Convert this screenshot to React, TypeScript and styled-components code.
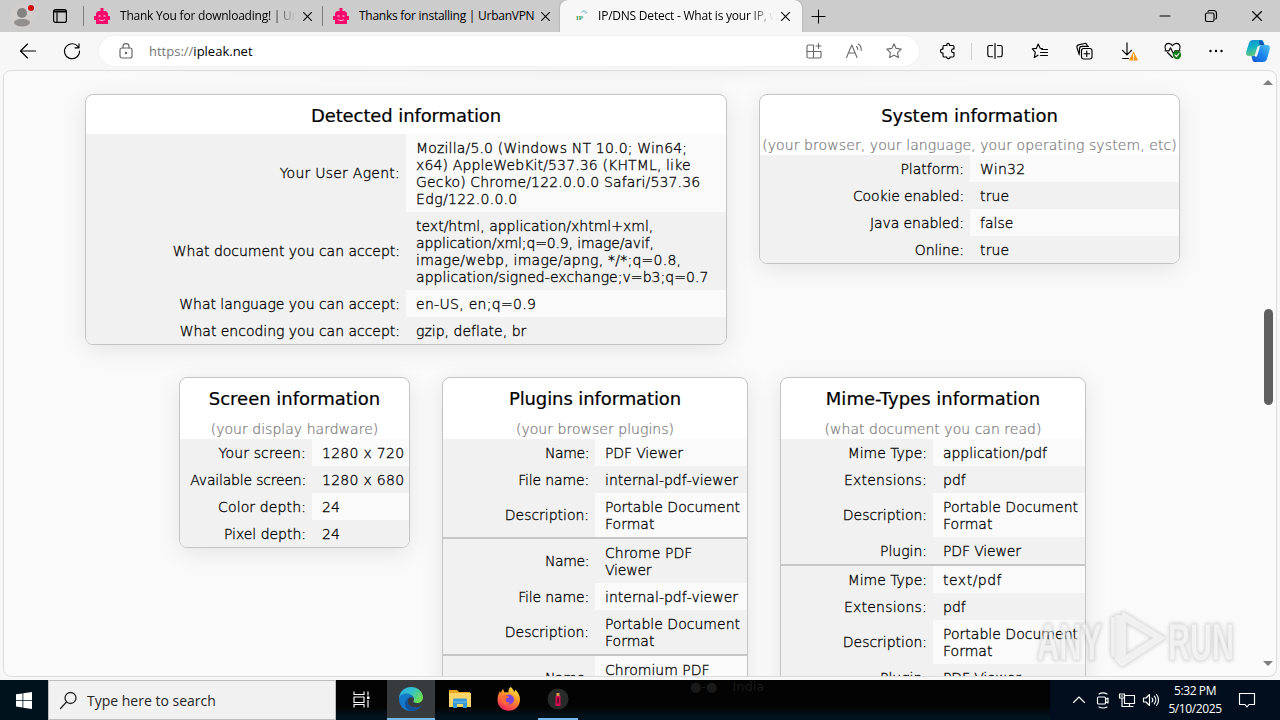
import React from 'react';
import styled, { createGlobalStyle } from 'styled-components';

const GlobalStyle = createGlobalStyle`
  * {
    box-sizing: border-box;
  }
  body {
    margin: 0;
    overflow: hidden;
    background: #f7f7f7;
    font-family: "Open Sans", "Noto Sans", sans-serif;
  }
  svg {
    display: block;
    flex-shrink: 0;
    overflow: visible;
  }
`;

const Desktop = styled.div`
  width: 1280px;
  height: 720px;
  display: flex;
  flex-direction: column;
  overflow: hidden;
`;

/* ---------- tab strip ---------- */

const TabStrip = styled.div`
  display: flex;
  height: 32px;
  flex-shrink: 0;
  background: #cccccc;
`;

const Slot = styled.div<{ w: number; muted?: boolean }>`
  width: ${(p) => p.w}px;
  flex-shrink: 0;
  display: flex;
  align-items: center;
  justify-content: center;
  color: ${(p) => (p.muted ? '#6a6a6a' : 'inherit')};
`;

const StripDivider = styled.div`
  width: 1px;
  height: 20px;
  margin-top: 6px;
  background: #7d7d7d;
`;

const Tab = styled.div<{ w: number; active?: boolean }>`
  width: ${(p) => p.w}px;
  display: flex;
  align-items: center;
  padding: 0 ${(p) => (p.active ? 12 : 10)}px 0 ${(p) => (p.active ? 16 : 10)}px;
  background: ${(p) => (p.active ? '#f7f7f7' : 'transparent')};
  border-radius: ${(p) => (p.active ? '8px 8px 0 0' : '0')};
  box-shadow: ${(p) => (p.active ? '0 0 2px #8d8d8d' : 'none')};
`;

const TabTitle = styled.div<{ fade?: boolean }>`
  width: 176px;
  margin-left: 10px;
  font-size: 12px;
  line-height: 18px;
  letter-spacing: ${(p) => (p.fade ? -0.22 : -0.26)}px;
  white-space: nowrap;
  overflow: hidden;
  color: #000;
  mask-image: ${(p) => (p.fade ? 'linear-gradient(to right, #000 86%, transparent 100%)' : 'none')};
`;

const Push = styled.div`
  flex: 1;
`;

/* ---------- toolbar ---------- */

const Toolbar = styled.div`
  display: flex;
  align-items: center;
  height: 38px;
  flex-shrink: 0;
  padding-left: 6px;
  background: #f7f7f7;
`;

const AddressBar = styled.div`
  display: flex;
  align-items: center;
  width: 820px;
  height: 30px;
  margin-left: 5px;
  padding-left: 12px;
  border-radius: 15px;
  background: #fff;
  box-shadow: 0 0 2px #e4e4e4;
`;

const Url = styled.div`
  flex: 1;
  margin-left: 8px;
  font-size: 13px;
  color: #000;
  span {
    color: #767676;
  }
`;

const ToolDivider = styled.div`
  width: 1px;
  height: 17px;
  background: #cfcfcf;
`;

/* ---------- page ---------- */

const Viewport = styled.div`
  position: relative;
  display: flex;
  width: 1274px;
  height: 607px;
  margin: 0 0 3px 3px;
  flex-shrink: 0;
  overflow: hidden;
  border: 1px solid #dcdcdc;
  border-radius: 8px;
  background: #fafafa;
`;

const Page = styled.div`
  width: 1256px;
  height: 605px;
  padding: 23px 0 0 81px;
  overflow: hidden;
  font-family: Verdana, "DejaVu Sans", sans-serif;
  background: radial-gradient(ellipse 560px 14px at 636px 0, #f1f1f1, #fafafa);
`;

const CardRow = styled.div<{ indent?: number; h: number }>`
  display: flex;
  align-items: flex-start;
  gap: 32px;
  height: ${(p) => p.h}px;
  padding-left: ${(p) => p.indent || 0}px;
`;

const CardBox = styled.div<{ w: number }>`
  width: ${(p) => p.w}px;
  flex-shrink: 0;
  overflow: hidden;
  border: 1px solid #c4c4c4;
  border-radius: 8px;
  background: #fff;
  box-shadow: 0 5px 24px rgba(0, 0, 0, 0.09);
`;

const CardTitle = styled.h3<{ h: number; spacing: number }>`
  height: ${(p) => p.h}px;
  margin: 0;
  text-align: center;
  font-size: 18px;
  font-weight: 400;
  line-height: 41px;
  letter-spacing: ${(p) => p.spacing}px;
  color: #000;
  -webkit-text-stroke: 0.2px #000;
`;

const CardNote = styled.div<{ h: number }>`
  display: flex;
  justify-content: center;
  height: ${(p) => p.h}px;
  font-size: 14px;
  font-weight: 200;
  line-height: ${(p) => (p.h > 20 ? 23 : 21)}px;
  letter-spacing: ${(p) => (p.h > 20 ? 0.03 : 0.09)}px;
  white-space: nowrap;
  color: #777;
  -webkit-text-stroke: 0.2px #777;
`;

const Group = styled.div`
  & + & {
    border-top: 2px solid #c6c6c6;
  }
`;

const InfoRow = styled.div`
  display: flex;
  font-size: 14px;
  font-weight: 200;
  line-height: 17px;
  color: #000;
  -webkit-text-stroke: 0.3px #000;
`;

const InfoLabel = styled.div<{ w: number; spacing: number }>`
  width: ${(p) => p.w}px;
  flex-shrink: 0;
  display: flex;
  align-items: center;
  justify-content: flex-end;
  padding: 1.5px 6px 0 0;
  letter-spacing: ${(p) => p.spacing}px;
  white-space: nowrap;
  background: #f1f1f1;
`;

const InfoValue = styled.div<{ light: boolean }>`
  flex: 1;
  padding: 6px 0 4px 10px;
  background: ${(p) => (p.light ? '#fafafa' : '#f1f1f1')};
`;

const ValueLine = styled.div<{ spacing: number }>`
  letter-spacing: ${(p) => p.spacing}px;
  white-space: nowrap;
`;

const Scrollbar = styled.div`
  display: flex;
  flex-direction: column;
  align-items: center;
  width: 16px;
  padding: 9px 0 0;
`;

const Arrow = styled.div<{ down?: boolean }>`
  border: 5px solid transparent;
  border-top-width: ${(p) => (p.down ? 5 : 0)}px;
  border-bottom-width: ${(p) => (p.down ? 0 : 5)}px;
  border-top-color: ${(p) => (p.down ? '#7e7e7e' : 'transparent')};
  border-bottom-color: ${(p) => (p.down ? 'transparent' : '#7e7e7e')};
`;

const Thumb = styled.div`
  width: 9px;
  height: 96px;
  margin: 224px 0 256px;
  border-radius: 5px;
  background: #5f5f5f;
`;

const Watermark = styled.svg`
  position: absolute;
  left: 1030px;
  top: 535px;
  opacity: 0.75;
  filter: drop-shadow(0 0 2px rgba(0, 0, 0, 0.35));
`;

/* ---------- taskbar ---------- */

const Taskbar = styled.div`
  display: flex;
  height: 40px;
  flex-shrink: 0;
  color: #fff;
  background: linear-gradient(to right, #00131c 48px, transparent 48px, transparent 1050px, #020d1d 1050px),
    linear-gradient(to bottom, #030303 68%, #02101b 88%, #001420);
`;

const SearchBox = styled.div`
  display: flex;
  align-items: center;
  width: 288px;
  padding-left: 11px;
  border: 1px solid #bdbdbd;
  background: #f1f1f1;
  font-size: 14px;
  color: #262626;
  span {
    margin-left: 10px;
  }
`;

const TaskButton = styled.div<{ w: number; active?: boolean; running?: boolean }>`
  width: ${(p) => p.w}px;
  display: flex;
  align-items: center;
  justify-content: center;
  background: ${(p) => (p.active ? '#383b3d' : 'transparent')};
  border-bottom: 2px solid ${(p) => (p.running ? '#76b9ed' : 'transparent')};
`;

const Ghost = styled.div`
  display: flex;
  align-items: flex-start;
  gap: 15px;
  margin-left: 112px;
  font: 13px "DejaVu Sans", sans-serif;
  line-height: 13px;
  color: #1a1a1a;
`;

const Clock = styled.div`
  width: 64px;
  padding-top: 2px;
  text-align: center;
  font-size: 12px;
  line-height: 18px;
  letter-spacing: -0.4px;
`;

/* ---------- icons ---------- */

const stroke = { fill: 'none', stroke: 'currentColor', strokeWidth: 1.15, strokeLinecap: 'round', strokeLinejoin: 'round' } as const;

const CloseIcon = ({ size = 9 }: { size?: number }) => (
  <svg width={size} height={size} viewBox="0 0 10 10" {...stroke}>
    <path d="M.5.5l9 9M9.5.5l-9 9" />
  </svg>
);

const ProfileIcon = () => (
  <svg width="24" height="24" viewBox="0 0 24 24">
    <circle cx="12" cy="12" r="11.5" fill="#d2cecc" />
    <circle cx="12" cy="9" r="5" fill="#858381" />
    <path d="M4 19c0-3 3-4 8-4s8 1 8 4c-1.500 2.400-4.500 3.500-8 3.500S5.500 21.400 4 19z" fill="#918f8d" />
    <circle cx="21" cy="4" r="3" fill="#dc0c0c" />
  </svg>
);

const TabActionsIcon = () => (
  <svg width="14" height="14" viewBox="0 0 14 14" {...stroke} strokeWidth="1.200">
    <rect x=".6" y=".6" width="12.800" height="12.800" rx="2" />
    <path d="M1 2h12M1 3h12M4 4v9" />
  </svg>
);

const RobotIcon = () => (
  <svg width="16" height="16" viewBox="0 0 16 16" fill="#f5096b">
    <path d="M6.500 0h3v3h-3zM2 5l2-2h8l2 2v3h2v4h-2v4H2v-4H0V8h2z" />
    <path d="M4.500 7.200h2v1.500h-2zM9.500 7.200h2v1.500h-2z" fill="#ff9dc5" />
    <path d="M5 11.500c2 1.500 4 1.500 6 0" stroke="#ffb3d3" fill="none" />
  </svg>
);

const IpIcon = () => (
  <svg width="12" height="12" viewBox="0 0 12 12">
    <text x="0" y="10" fontSize="7" fontWeight="700" fill="#3a9b54" fontFamily="Liberation Serif, serif">IP</text>
    <path d="M5 2.500C7 .8 9 1.500 10 4M7 .8c2-.5 3.500.6 4 2.200" fill="none" stroke="#69b7cc" strokeWidth=".8" />
  </svg>
);

const Lines = ({ d, size = 16, w = 1.15 }: { d: string; size?: number; w?: number }) => (
  <svg width={size} height={size} viewBox="0 0 16 16" {...stroke} strokeWidth={w}>
    <path d={d} />
  </svg>
);

const STAR = 'M8 .8l2.200 4.600 5 .7-3.600 3.500.8 5L8 12.200l-4.400 2.400.8-5L.8 6.100l5-.7z';

const ReadAloudIcon = () => (
  <svg width="16" height="16" viewBox="0 0 16 16" {...stroke} strokeWidth="1.1">
    <path d="M.5 14.500L5.800 2l5.200 12.500M2.400 10h6.800M10.500 3.500c1 .9 1.400 1.900 1.300 3.200M12.500 1c2 1.600 3 3.600 2.700 6.500" />
  </svg>
);

const CollectionsIcon = () => (
  <svg width="17" height="17" viewBox="0 0 17 17" {...stroke}>
    <rect x="5.500" y="5.500" width="10.500" height="10.500" rx="2.200" />
    <path d="M10.750 8v5.500M8 10.750h5.500M3.300 11.800L1 4.500C.6 3 1.200 2.300 2.500 1.900L8.500.5c1.400-.3 2.200.3 2.500 1.500l.3 1M3.500 10V6c0-1.500 1-2.600 2.500-2.600h6.500" />
  </svg>
);

const DownloadIcon = () => (
  <svg width="18" height="19" viewBox="0 0 18 19" {...stroke}>
    <path d="M7 .7v12M2.500 8.300L7 12.800l4.500-4.500M2.700 16.500h6" />
    <path d="M13.500 10.500l3.800 7.500h-7.600z" fill="#f79a1c" stroke="#f79a1c" />
    <path d="M13.500 12.500v2.500M13.500 16.800v.1" stroke="#fff" />
  </svg>
);

const HealthIcon = () => (
  <svg width="18" height="18" viewBox="0 0 18 18" {...stroke}>
    <path d="M1.600 7.500C.2 4.500 1.500 1.300 4.500 1.300c1.800 0 3.200 1 4 2.300.8-1.300 2.200-2.300 4-2.300 3 0 4.400 3.200 3 6.200M3.500 10.500l5 5M1 8.800h4l1.500-3 3 6 1.500-3h5" />
    <circle cx="13" cy="13" r="4.200" fill="#167a19" stroke="none" />
    <path d="M11 13l1.500 1.500 2.500-3" stroke="#fff" />
  </svg>
);

const CopilotIcon = () => (
  <svg width="24" height="22" viewBox="0 0 24 22">
    <defs>
      <linearGradient id="cpA" x1="0" y1="0" x2=".3" y2="1">
        <stop offset="0" stopColor="#1688d8" />
        <stop offset=".5" stopColor="#12b4c6" />
        <stop offset="1" stopColor="#67c77a" />
      </linearGradient>
      <linearGradient id="cpB" x1="1" y1="0" x2="0" y2="1">
        <stop offset="0" stopColor="#51c5ef" />
        <stop offset=".5" stopColor="#1b85ee" />
        <stop offset="1" stopColor="#1554d5" />
      </linearGradient>
    </defs>
    <path d="M7 0h8c2.500 0 2.500 2 3.500 5h-3c-2 0-3 1-3.600 3l-1.700 5c-.6 2-1.500 3-3.500 3H3c-2.500 0-3.500-2-2.700-4.500L3 3C3.700 1 5 0 7 0z" fill="url(#cpA)" />
    <path d="M17 22H9c-2.500 0-2.500-2-3.500-6h2c2 0 3-1 3.600-3l1.700-5c.6-2 1.500-3 3.500-3H21c2.500 0 3.500 2 2.700 4.500L21 19c-.7 2-2 3-4 3z" fill="url(#cpB)" />
    <path d="M13 .5h3l2.500 4.500h-5z" fill="#1455b5" />
    <path d="M12.500 7.500l-2.500 8" stroke="#f7f7f7" strokeWidth="2.500" strokeLinecap="round" />
  </svg>
);

const EdgeIcon = () => (
  <svg width="24" height="24" viewBox="0 0 24 24">
    <defs>
      <linearGradient id="edA" x1="0" y1="0" x2="1" y2=".5">
        <stop offset="0" stopColor="#2aa8e0" />
        <stop offset=".55" stopColor="#35c2c9" />
        <stop offset="1" stopColor="#6bdc55" />
      </linearGradient>
    </defs>
    <path d="M0 12C0 5 5 0 12 0s12 5 12 10.500c0 3.500-2.500 5.500-6 5.500-2.700 0-4-1-3.500-2 1.500-3-.5-6-4-6C5 8 1 10 0 12z" fill="url(#edA)" />
    <path d="M0 12c.3-3.800 4-5.500 7.500-5.500 4 0 7 2.500 7.200 5.500C13.500 9.500 9 9.500 8.500 14c-.4 4 4 7.500 9.500 6.500 2-.3 3-1.200 4-1.500C20 22 16.500 24 12 24 5 24 0 19 0 12z" fill="#1479c9" />
    <path d="M8.500 14c-.4 4 4 7.500 9.500 6.500 2-.3 3-1.200 4-1.500-2.500 4-7 5.500-11.500 4.500-5-2-6-8-2-12 1-1 2.500-1.500 3.500-1.200-2 .4-3.300 1.700-3.500 3.700z" fill="#12529b" />
  </svg>
);

const FolderIcon = () => (
  <svg width="22" height="20" viewBox="0 0 22 20">
    <path d="M0 1h8l2 2h11v5H0z" fill="#e9a820" />
    <path d="M0 4h22v14H0z" fill="#ffd667" />
    <path d="M4 11c0-1 .5-1.500 1.500-1.500h11c1 0 1.500.5 1.500 1.500v8h-4v-4H8v4H4z" fill="#369bd8" />
    <path d="M4 13h14" stroke="#77bde4" />
  </svg>
);

const FirefoxIcon = () => (
  <svg width="24" height="24" viewBox="0 0 24 24">
    <defs>
      <linearGradient id="ffA" x1=".8" y1="0" x2=".3" y2="1">
        <stop offset="0" stopColor="#fff04a" />
        <stop offset=".4" stopColor="#ff9a27" />
        <stop offset="1" stopColor="#f5235f" />
      </linearGradient>
    </defs>
    <path d="M13.500 0c1.500 1 3 2.500 3.500 5 1-.7 1-1.500 1-2.500 3 2.500 5 6 5 10 0 6.500-5 11.300-11.200 11.300S.5 19 .5 13c0-4 1-6 2.500-9l1 2.200C4.500 4 5 3 6 2l1.500 3.500c2-.2 3-.2 4 .2-.3-2.200.4-4.200 2-5.700z" fill="url(#ffA)" />
    <circle cx="12" cy="12.500" r="5" fill="#7b46d8" />
    <path d="M5 9c2.500-1.500 5-1 7 1l-3 1.500C8 14 10 16 13 15.500c-3 4-9 1.500-9-3z" fill="#ff6b35" />
  </svg>
);

const AppIcon = () => (
  <svg width="22" height="22" viewBox="0 0 22 22">
    <circle cx="11" cy="11" r="10.500" fill="#292b2b" />
    <path d="M8.500 8h5v10h-5z" fill="#d40e52" />
    <path d="M9.500 5h3v3h-3z" fill="#d99a50" />
    <path d="M10.300 9.500h1.500v6h-1.500z" fill="#43131f" />
  </svg>
);

const TaskViewIcon = () => (
  <svg width="17" height="17" viewBox="0 0 17 17" {...stroke} strokeLinecap="square">
    <path d="M1 1v2.500h10V1M1 6h10v5.500H1zM1 16v-2.500h10V16M15 1v3M15 9.500V16" />
    <rect x="14" y="5.500" width="2.500" height="2.500" fill="#fff" stroke="none" />
  </svg>
);

/* ---------- data ---------- */

interface Entry {
  label: string;
  value: string;
  // letter spacing of the label, and of the value (one number, or one for each line)
  ls?: number;
  vs?: number | number[];
}

interface CardProps {
  title: string;
  titleSpacing?: number;
  note?: string;
  noteHeight?: number;
  width: number;
  labelWidth: number;
  groups: Entry[][];
}

const detected: Entry[][] = [[
  { label: 'Your User Agent:', value: 'Mozilla/5.0 (Windows NT 10.0; Win64;\nx64) AppleWebKit/537.36 (KHTML, like\nGecko) Chrome/122.0.0.0 Safari/537.36\nEdg/122.0.0.0', ls: 0.25, vs: [0.18, 0.14, 0.16, 0.3] },
  { label: 'What document you can accept:', value: 'text/html, application/xhtml+xml,\napplication/xml;q=0.9, image/avif,\nimage/webp, image/apng, */*;q=0.8,\napplication/signed-exchange;v=b3;q=0.7', vs: [0, -0.13, 0.25, 0.05] },
  { label: 'What language you can accept:', value: 'en-US, en;q=0.9', vs: 0.3 },
  { label: 'What encoding you can accept:', value: 'gzip, deflate, br' },
]];

const system: Entry[][] = [[
  { label: 'Platform:', value: 'Win32', vs: 0.25 },
  { label: 'Cookie enabled:', value: 'true', ls: -0.13, vs: 0.15 },
  { label: 'Java enabled:', value: 'false', ls: -0.08 },
  { label: 'Online:', value: 'true', ls: -0.1, vs: 0.15 },
]];

const screenInfo: Entry[][] = [[
  { label: 'Your screen:', value: '1280 x 720', ls: 0.15, vs: 0.28 },
  { label: 'Available screen:', value: '1280 x 680', ls: -0.2, vs: 0.28 },
  { label: 'Color depth:', value: '24', ls: 0.12 },
  { label: 'Pixel depth:', value: '24' },
]];

const plugins: Entry[][] = [
  [
    { label: 'Name:', value: 'PDF Viewer', ls: -0.4, vs: -0.15 },
    { label: 'File name:', value: 'internal-pdf-viewer', ls: -0.15 },
    { label: 'Description:', value: 'Portable Document\nFormat' },
  ],
  [
    { label: 'Name:', value: 'Chrome PDF\nViewer', ls: -0.4, vs: [0.08, -0.2] },
    { label: 'File name:', value: 'internal-pdf-viewer', ls: -0.15 },
    { label: 'Description:', value: 'Portable Document\nFormat' },
  ],
  [{ label: 'Name:', value: 'Chromium PDF\nViewer', ls: -0.4 }],
];

const mimeTypes: Entry[][] = ['application/pdf', 'text/pdf'].map((type) => [
  { label: 'Mime Type:', value: type, vs: type === 'text/pdf' ? 0.5 : -0.05 },
  { label: 'Extensions:', value: 'pdf', ls: 0.2 },
  { label: 'Description:', value: 'Portable Document\nFormat' },
  { label: 'Plugin:', value: 'PDF Viewer', vs: -0.15 },
]);

const InfoCard = ({ title, titleSpacing = 0, note, noteHeight = 21, width, labelWidth, groups }: CardProps) => {
  let index = 0;
  return (
    <CardBox w={width}>
      <CardTitle h={note ? 40 : 39} spacing={titleSpacing}>{title}</CardTitle>
      {note && <CardNote h={noteHeight}>{note}</CardNote>}
      {groups.map((group, g) => (
        <Group key={g}>
          {group.map(({ label, value, ls = -0.02, vs = 0.02 }) => (
            <InfoRow key={label}>
              <InfoLabel w={labelWidth} spacing={ls}>{label}</InfoLabel>
              <InfoValue light={index++ % 2 === 0}>
                {value.split('\n').map((line, i) => (
                  <ValueLine key={line} spacing={Array.isArray(vs) ? vs[i] : vs}>{line}</ValueLine>
                ))}
              </InfoValue>
            </InfoRow>
          ))}
        </Group>
      ))}
    </CardBox>
  );
};

const BrowserTabs = () => (
  <TabStrip>
    <Slot w={44}><ProfileIcon /></Slot>
    <Slot w={32}><TabActionsIcon /></Slot>
    <Slot w={7} />
    <StripDivider />
    <Tab w={238}>
      <RobotIcon />
      <TabTitle fade>Thank You for downloading! | Urban</TabTitle>
      <Push />
      <CloseIcon />
    </Tab>
    <StripDivider />
    <Tab w={237}>
      <RobotIcon />
      <TabTitle>Thanks for installing | UrbanVPN</TabTitle>
      <Push />
      <CloseIcon />
    </Tab>
    <Tab w={242} active>
      <IpIcon />
      <TabTitle fade>IP/DNS Detect - What is your IP, what</TabTitle>
      <Push />
      <CloseIcon />
    </Tab>
    <Slot w={33}><Lines d="M8 1v14M1 8h14" size={15} /></Slot>
    <Push />
    <Slot w={46}><Lines d="M3 8h10" /></Slot>
    <Slot w={46}><Lines d="M5 3.500C5 2.800 5.700 2.500 6.500 2.500h4c2 0 3 1 3 3v4c0 .8-.4 1.500-1 1.500M4 5h5.500c1 0 1.500.5 1.500 1.500V12c0 1-.5 1.500-1.500 1.500H4c-1 0-1.500-.5-1.500-1.500V6.500C2.500 5.500 3 5 4 5z" /></Slot>
    <Slot w={46}><CloseIcon size={10} /></Slot>
  </TabStrip>
);

const BrowserToolbar = () => (
  <Toolbar>
    <Slot w={44}><Lines d="M15.500 8H.5M7.500 1L.5 8l7 7" /></Slot>
    <Slot w={44}><Lines d="M14.500 4.500A7.500 7.500 0 1 0 15.500 8M15 .8v4h-4" /></Slot>
    <AddressBar>
      <Slot w={30}>
        <svg width="14" height="16" viewBox="0 0 14 16" color="#666" {...stroke}>
          <rect x="1" y="5" width="12" height="10" rx="2" />
          <path d="M4 5V3.500C4 1.700 5.300.6 7 .6s3 1.100 3 2.900V5" />
          <circle cx="7" cy="10" r=".7" fill="#666" />
        </svg>
      </Slot>
      <Url><span>https://</span>ipleak.net</Url>
      <Slot w={40} muted><Lines d="M1 8.500h14M7.500 2v13M1 13.500V3.500C1 2.500 1.500 2 2.500 2h5M1 13.500c0 1 .5 1.500 1.500 1.500h11c1 0 1.500-.5 1.500-1.500v-5M12.500.5v5M10 3h5" /></Slot>
      <Slot w={40} muted><ReadAloudIcon /></Slot>
      <Slot w={40} muted><Lines d={STAR} w={1.1} /></Slot>
      <Slot w={5} />
    </AddressBar>
    <Slot w={5} />
    <Slot w={47}><Lines d="M4 2.500h3C6.500.8 7.200.4 8 .4s1.800.5 1.500 2.100H13c.5 0 1 .4 1 1V6c-1.800-.3-2.500.7-2.500 1.800 0 1.200.9 2 2.500 1.700v3.300c0 .7-.4 1.200-1.200 1.200H10c.2 1-.6 1.600-1.700 1.600S6.500 15 6.800 14H4.200c-.7 0-1.200-.5-1.200-1.200V10C1.300 10.200.5 9.200.5 8S1.400 5.800 3 6.200V3.500c0-.6.4-1 1-1z" /></Slot>
    <ToolDivider />
    <Slot w={46}><Lines d="M5.500 2.500h-3c-1 0-1.700.6-1.700 1.600v8c0 1 .7 1.600 1.700 1.600h3M10.500 2.500h3c1 0 1.700.6 1.700 1.600v8c0 1-.7 1.600-1.700 1.600h-3M8 .5v15" /></Slot>
    <Slot w={44}><Lines d="M6.200 1l2 4.200 2.300.4M6.200 1L4.300 5.400l-4 .4 3 3.500-1 5.200L6 12.200M9.500 6.500h6M8.500 9.500h7M8.500 12.500h7" /></Slot>
    <Slot w={44}><CollectionsIcon /></Slot>
    <Slot w={46}><DownloadIcon /></Slot>
    <Slot w={42}><HealthIcon /></Slot>
    <Slot w={43}>
      <svg width="14" height="4" viewBox="0 0 14 4">
        <circle cx="1.500" cy="2" r="1.200" /><circle cx="7" cy="2" r="1.200" /><circle cx="12.500" cy="2" r="1.200" />
      </svg>
    </Slot>
    <Slot w={41}><CopilotIcon /></Slot>
  </Toolbar>
);

const AnyRunMark = () => (
  <Watermark width="206" height="66" viewBox="0 0 206 66">
    <g fill="#fff" fillOpacity=".7" stroke="#dcdcdc" strokeWidth=".8" fontFamily="Liberation Sans Narrow, Liberation Sans, sans-serif" fontSize="51" fontWeight="700">
      <text x="3" y="54" textLength="65" lengthAdjust="spacingAndGlyphs">ANY</text>
      <text x="134" y="54" textLength="66" lengthAdjust="spacingAndGlyphs">RUN</text>
      <path fillRule="evenodd" d="M88 5l44 27-44 29-7-7V9h7zM92 16v33l27-17z" />
      <path d="M77 11h4v41l-4-3z" />
    </g>
  </Watermark>
);

const App = () => {
  return (
    <Desktop>
      <GlobalStyle />
      <BrowserTabs />
      <BrowserToolbar />
      <Viewport>
        <Page>
          <CardRow h={283}>
            <InfoCard title="Detected information" titleSpacing={-0.1} width={642} labelWidth={320} groups={detected} />
            <InfoCard title="System information" note="(your browser, your language, your operating system, etc)" noteHeight={20} width={421} labelWidth={210} groups={system} />
          </CardRow>
          <CardRow h={400} indent={94}>
            <InfoCard title="Screen information" note="(your display hardware)" width={231} labelWidth={132} groups={screenInfo} />
            <InfoCard title="Plugins information" titleSpacing={-0.1} note="(your browser plugins)" width={306} labelWidth={152} groups={plugins} />
            <InfoCard title="Mime-Types information" note="(what document you can read)" width={306} labelWidth={152} groups={mimeTypes} />
          </CardRow>
        </Page>
        <Scrollbar>
          <Arrow />
          <Thumb />
          <Arrow down />
        </Scrollbar>
        <AnyRunMark />
      </Viewport>
      <Taskbar>
        <Slot w={48}>
          <svg width="16" height="17" viewBox="0 0 16 17" fill="#fff">
            <path d="M0 2.300L6.500 1.400V8H0zM7.300 1.300L16 0v8H7.300zM0 8.800h6.500v6.700L0 14.600zM7.300 8.800H16V17l-8.700-1.300z" />
          </svg>
        </Slot>
        <SearchBox>
          <svg width="17" height="17" viewBox="0 0 17 17" {...stroke} strokeWidth="1.300">
            <circle cx="10.500" cy="6" r="5.500" />
            <path d="M6.500 10L.5 16.500" />
          </svg>
          <span>Type here to search</span>
        </SearchBox>
        <TaskButton w={51}><TaskViewIcon /></TaskButton>
        <TaskButton w={48} active running><EdgeIcon /></TaskButton>
        <TaskButton w={50}><FolderIcon /></TaskButton>
        <TaskButton w={48}><FirefoxIcon /></TaskButton>
        <Slot w={5} />
        <TaskButton w={40} running><AppIcon /></TaskButton>
        <Ghost><span>●-●</span><span>India</span></Ghost>
        <Push />
        <Slot w={25}><Lines d="M2.500 10.500L8 5l5.500 5.500" /></Slot>
        <Slot w={24}><Lines d="M3.500 5h6c.6 0 1 .4 1 1v5c0 .6-.4 1-1 1h-6c-.6 0-1-.4-1-1V6c0-.6.4-1 1-1zM10.500 7.500L13 6v5l-2.500-1.500M4 2c2.500-1.500 5.500-1.500 8 0M4 15c2.500 1.300 5.500 1.300 8 0" /></Slot>
        <Slot w={24}><Lines d="M5.500 3.500h10v8h-10zM10.500 11.500V14M7 14.500h7M.5 2h5v4h-5zM3 6v8.500h4M2 4h2" /></Slot>
        <Slot w={24}><Lines d="M.5 6h2.500L6.500 2.500v11L3 10H.5zM9 6c1 1.200 1 2.800 0 4M11.300 4.200c2 2.200 2 5.400 0 7.600M13.500 2.500c2.700 3.200 2.700 7.800 0 11" /></Slot>
        <Clock>5:32 PM<br />5/10/2025</Clock>
        <Slot w={40}><Lines d="M.5 1.500h15v11H10L8 15l-2-2.500H.5z" /></Slot>
        <Slot w={13} />
      </Taskbar>
    </Desktop>
  );
};

export default App;
